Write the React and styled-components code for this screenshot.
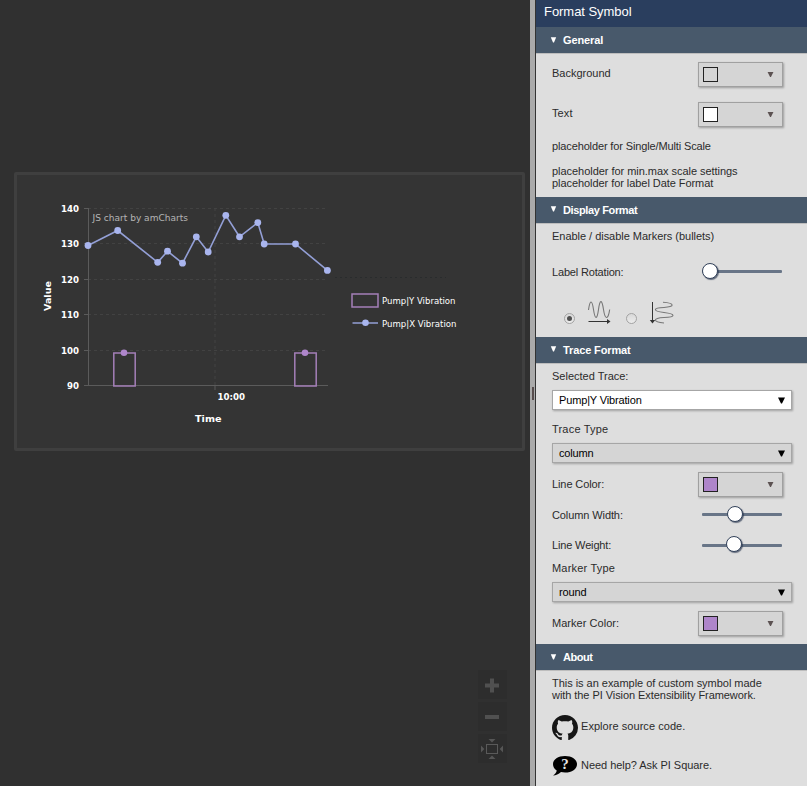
import React from "react";
import styled, { createGlobalStyle } from "styled-components";

const GlobalStyle = createGlobalStyle`
  * { box-sizing: border-box; }
  html, body { margin: 0; padding: 0; background: #303030; overflow: hidden; }
  body { font-family: "Liberation Sans", Arial, sans-serif; font-size: 11px; line-height: 12px; color: #2b2b2b; }
`;

const Workspace = styled.div`
  display: flex;
  width: 807px;
  height: 786px;
`;

const Canvas = styled.main`
  width: 530px;
  height: 786px;
  padding: 172px 5px 23px 14px;
  display: flex;
  flex-direction: column;
  background: #303030;
`;

const SymbolFrame = styled.section`
  width: 511px;
  height: 279px;
  border: 3px solid #3f3f3f;
  border-radius: 2px;
  background: #343434;
`;

const ChartSvg = styled.svg`
  display: block;
  font-family: "DejaVu Sans", Verdana, sans-serif;
`;

const ZoomTools = styled.div`
  margin: auto 18px 0 auto;
  display: flex;
  flex-direction: column;
  gap: 3px;
`;

const ZoomButton = styled.button`
  width: 29px;
  height: 29px;
  padding: 0;
  border: 0;
  background: #2d2d2d;
  svg { display: block; }
`;

const Splitter = styled.div`
  width: 6px;
  display: flex;
  align-items: center;
  justify-content: flex-end;
  background: #aaaaaa;
  border-right: 1px solid #333;
`;

const Grip = styled.span`
  width: 2px;
  height: 13px;
  margin-right: 1px;
  background: #574d4d;
`;

const Panel = styled.aside`
  width: 271px;
  background: #dedede;
`;

const PanelTitle = styled.h1`
  margin: 0;
  height: 27px;
  padding: 4px 8px 0;
  background: #2a3e5e;
  color: #fff;
  font-size: 13px;
  line-height: 15px;
  font-weight: 400;
  letter-spacing: -0.05px;
`;

const SectionHeader = styled.h2`
  margin: 0;
  height: 26px;
  padding: 0 14px;
  display: flex;
  align-items: center;
  gap: 5px;
  background: #48596b;
  color: #fff;
  font-size: 11px;
  font-weight: 700;
  letter-spacing: ${(p) => p.$spacing || 0}px;
  svg { margin-top: ${(p) => p.$caretTop}px; }
`;

const SectionBody = styled.div`
  height: ${(p) => p.$height}px;
  padding: 0 15px 0 16px;
  border-top: 1px solid #bdbdbd;
  display: flex;
  flex-direction: column;
`;

const Label = styled.div`
  height: 12px;
  margin-top: ${(p) => p.$top || 0}px;
  white-space: nowrap;
  letter-spacing: ${(p) => p.$spacing || 0}px;
`;

const Row = styled.div`
  display: flex;
  justify-content: space-between;
  align-items: flex-start;
  height: ${(p) => p.$height || 25}px;
  margin-top: ${(p) => p.$top || 0}px;
  padding-right: ${(p) => p.$inset ?? 9}px;
`;

const ColorButton = styled.button`
  width: 85px;
  height: 25px;
  padding: 0 8px 0 4px;
  display: flex;
  align-items: center;
  justify-content: space-between;
  background: #d5d5d5;
  border: 1px solid #a0a0a0;
  box-shadow: 1px 1px 2px rgba(0, 0, 0, 0.3);
`;

const Swatch = styled.span`
  width: 15px;
  height: 15px;
  border: 1px solid #222;
  background: ${(p) => p.$color};
`;

const SelectBox = styled.button`
  width: 240px;
  height: 20px;
  flex: none;
  margin-top: ${(p) => p.$top}px;
  padding: 0 6px;
  display: flex;
  align-items: center;
  justify-content: space-between;
  background: ${(p) => (p.$active ? "#fff" : "#d5d5d5")};
  border: 1px solid #a6a6a6;
  box-shadow: 1px 1px 2px rgba(0, 0, 0, 0.28);
  color: #000;
  font: 11px/12px "Liberation Sans", Arial, sans-serif;
  letter-spacing: -0.15px;
`;

const Track = styled.div`
  width: 80px;
  height: 3px;
  margin-top: ${(p) => p.$top}px;
  border-radius: 1px;
  background: #687587;
`;

const Thumb = styled.div`
  width: 16px;
  height: 16px;
  margin-left: ${(p) => p.$offset}px;
  transform: translateY(${(p) => p.$lift || -7}px);
  border: 1px solid #33425a;
  border-radius: 50%;
  background: #fff;
  box-shadow: 1px 1px 1px rgba(30, 45, 70, 0.65);
`;

const Orientation = styled.div`
  display: flex;
  height: 25px;
  margin-top: 19px;
  padding-left: 12px;
`;

const Radio = styled.span`
  width: 11px;
  height: 11px;
  margin-top: 12px;
  display: flex;
  align-items: center;
  justify-content: center;
  border: 1px solid #a3a3a3;
  border-radius: 50%;
  background: linear-gradient(#d8d8d8, #ececec);
  &::after {
    content: "";
    width: 5px;
    height: 5px;
    border-radius: 50%;
    background: ${(p) => (p.$checked ? "#505050" : "transparent")};
  }
`;

const WaveIcon = styled.svg`
  width: 26px;
  height: 26px;
  margin: 0 ${(p) => p.$after || 0}px 0 ${(p) => p.$before}px;
`;

const LinkRow = styled.a`
  display: flex;
  align-items: center;
  height: 26px;
  gap: 3px;
  margin-top: 13px;
  letter-spacing: ${(p) => p.$spacing}px;
  svg { flex: none; }
`;

const LinkText = styled.span`
  padding-bottom: 2px;
`;

const Caret = ({ color = "#000", w = 7, h = 7 }) => (
  <svg width={w} height={h} viewBox="0 0 7 6">
    <path d="M0 0H7L4 6H3Z" fill={color} />
  </svg>
);

const Header = ({ children, spacing, caretTop = -2 }) => (
  <SectionHeader $spacing={spacing} $caretTop={caretTop}>
    <svg width="8" height="6" viewBox="0 0 8 6"><path d="M.8 .2H6.2L4 5.5H3Z" fill="#fff" /></svg>
    {children}
  </SectionHeader>
);

const ColorRow = ({ label, color, top, labelTop = 5, spacing }) => (
  <Row $top={top}>
    <Label $top={labelTop} $spacing={spacing}>{label}</Label>
    <ColorButton aria-label={label}>
      <Swatch $color={color} />
      <Caret color="#5c5252" w={7} h={5} />
    </ColorButton>
  </Row>
);

const SliderRow = ({ label, top, height, offset, trackTop, lift, spacing = -0.1 }) => (
  <Row $top={top} $height={height} $inset={10}>
    <Label $spacing={spacing}>{label}</Label>
    <Track $top={trackTop}><Thumb $offset={offset} $lift={lift} /></Track>
  </Row>
);

const Select = ({ value, top, active }) => (
  <SelectBox $top={top} $active={active}>{value}<Caret /></SelectBox>
);

const points = [
  [88, 245.5], [117.7, 230.5], [157.7, 262.3], [167.5, 251.2], [182.5, 263.2],
  [196.3, 236.8], [208.2, 252], [225.8, 215.3], [239.5, 236.8], [257.8, 222.6],
  [264.2, 244], [295.5, 244], [327.4, 270.4],
];
const ticks = [[140, 208.5], [130, 243.5], [120, 279.5], [110, 314.5], [100, 350.5], [90, 385.5]];
const columns = [[113.8, 124], [294.8, 305]];

const Chart = () => (
  <ChartSvg width="505" height="273" viewBox="17 175 505 273">
    <g stroke="#424242" strokeDasharray="3 3">
      {ticks.map(([v, y]) => <path key={v} d={`M88 ${y}H327`} />)}
      <path d="M215 208V386" />
    </g>
    <path d="M335 277.5H446" stroke="#292c2d" strokeDasharray="2 3" />
    <g stroke="#5b5b5b">
      <path d="M88.5 208V386M84 385.5H328M215 386V390" />
      {ticks.map(([v, y]) => <path key={v} d={`M84 ${y}H89`} />)}
    </g>
    <g fill="#fff" fontWeight="700" fontSize="9">
      {ticks.map(([v, y]) => (
        <text key={v} x={v === 90 ? 67 : 61} y={y + 3.5} textLength={v === 90 ? 12 : 18} lengthAdjust="spacingAndGlyphs">{v}</text>
      ))}
      <text x="217.5" y="400" textLength="27.5" lengthAdjust="spacingAndGlyphs">10:00</text>
      <text x="195" y="422" textLength="26.5" lengthAdjust="spacingAndGlyphs">Time</text>
      <text transform="translate(51 311) rotate(-90)" textLength="30" lengthAdjust="spacingAndGlyphs">Value</text>
    </g>
    <text x="92.5" y="220.5" fontSize="9.5" fill="#b4b4b4" textLength="95.5" lengthAdjust="spacingAndGlyphs">JS chart by amCharts</text>
    {columns.map(([x, cx]) => (
      <g key={x}>
        <path d={`M${x} 353H${x + 21.4}V386H${x}Z`} fill="none" stroke="#a47fb8" strokeWidth="1.5" />
        <circle cx={cx} cy="352.7" r="3.3" fill="#af86cb" />
      </g>
    ))}
    <polyline points={points.map((p) => p.join(",")).join(" ")} fill="none" stroke="#939fd6" strokeWidth="1.6" />
    {points.map(([x, y]) => <circle key={x} cx={x} cy={y} r="3.4" fill="#a9b5ee" />)}
    <rect x="352" y="294" width="26" height="13" fill="none" stroke="#a47fb8" strokeWidth="1.5" />
    <path d="M352.5 323H378" stroke="#939fd6" strokeWidth="1.5" />
    <circle cx="365.5" cy="322.8" r="3.3" fill="#a9b5ee" />
    <g fill="#fff" fontSize="9">
      <text x="382" y="304" textLength="73.5" lengthAdjust="spacingAndGlyphs">Pump|Y Vibration</text>
      <text x="382" y="327" textLength="74.5" lengthAdjust="spacingAndGlyphs">Pump|X Vibration</text>
    </g>
  </ChartSvg>
);

export default function App() {
  return (
    <Workspace>
      <GlobalStyle />
      <Canvas>
        <SymbolFrame><Chart /></SymbolFrame>
        <ZoomTools>
          <ZoomButton aria-label="Zoom in">
            <svg width="29" height="29"><path d="M7 15.5H21M14 8.500V22.500" stroke="#505050" strokeWidth="4" /></svg>
          </ZoomButton>
          <ZoomButton aria-label="Zoom out">
            <svg width="29" height="29"><path d="M7 15H21" stroke="#505050" strokeWidth="4" /></svg>
          </ZoomButton>
          <ZoomButton aria-label="Fit to screen">
            <svg width="29" height="29">
              <rect x="8.5" y="10.5" width="11" height="9" fill="none" stroke="#5a5a5a" />
              <path d="M10.5 5H17.5L14 8.5ZM10.5 25H17.5L14 21.5ZM3 11.5V18.5L6.3 15ZM25 11.5V18.5L21.7 15Z" fill="#565656" />
            </svg>
          </ZoomButton>
        </ZoomTools>
      </Canvas>
      <Splitter><Grip /></Splitter>
      <Panel>
        <PanelTitle>Format Symbol</PanelTitle>

        <Header spacing={-0.1} caretTop={0}>General</Header>
        <SectionBody $height={144}>
          <ColorRow label="Background" color="#d5d5d5" top={8} />
          <ColorRow label="Text" color="#fff" top={15} spacing={0.1} />
          <Label $top={13} $spacing={-0.13}>placeholder for Single/Multi Scale</Label>
          <Label $top={13} $spacing={-0.04}>placeholder for min.max scale settings</Label>
          <Label $spacing={-0.06}>placeholder for label Date Format</Label>
        </SectionBody>

        <Header spacing={-0.37}>Display Format</Header>
        <SectionBody $height={114}>
          <Label $top={6} $spacing={-0.03}>Enable / disable Markers (bullets)</Label>
          <SliderRow label="Label Rotation:" top={24} height={16} offset={0} trackTop={4} spacing={-0.17} />
          <Orientation>
            <Radio $checked />
            <WaveIcon $before={13} $after={12} viewBox="1 0 26 26">
              <path d="M1.500 9C3-1.500 5-1.500 6.500 8.500S10 19.500 11.500 8.500 15-1.500 16.500 8.500 21 20 22.700 8.500" fill="none" stroke="#777" strokeWidth="1.1" />
              <path d="M1.500 20.500H21" stroke="#333" /><path d="M20 18L23.500 20.500 20 23" fill="#333" />
            </WaveIcon>
            <Radio />
            <WaveIcon $before={12} viewBox="0 0 26 26">
              <path d="M14 1.200C26 2 26 6 15 6.500S3 10 15 11.500 27 16 15 16.500 4 21 15 22" fill="none" stroke="#777" strokeWidth="1.1" />
              <path d="M3.500 1V21" stroke="#333" /><path d="M.8 19L3.500 22.500 6.200 19" fill="#333" />
            </WaveIcon>
          </Orientation>
        </SectionBody>

        <Header spacing={-0.12}>Trace Format</Header>
        <SectionBody $height={281}>
          <Label $top={6}>Selected Trace:</Label>
          <Select value="Pump|Y Vibration" top={8} active />
          <Label $top={13} $spacing={0.2}>Trace Type</Label>
          <Select value="column" top={8} />
          <ColorRow label="Line Color:" color="#ae85ca" top={9} labelTop={6} spacing={-0.1} />
          <SliderRow label="Column Width:" top={12} height={12} offset={25} trackTop={4} />
          <SliderRow label="Line Weight:" top={18} height={12} offset={24} trackTop={5} lift={-8} spacing={-0.15} />
          <Label $top={11} $spacing={0.2}>Marker Type</Label>
          <Select value="round" top={8} />
          <ColorRow label="Marker Color:" color="#ae85ca" top={9} labelTop={6} spacing={0.04} />
        </SectionBody>

        <Header spacing={-0.45} caretTop={0}>About</Header>
        <SectionBody $height={116}>
          <Label $top={6} $spacing={-0.03}>This is an example of custom symbol made</Label>
          <Label $spacing={-0.06}>with the PI Vision Extensibility Framework.</Label>
          <LinkRow $spacing={0.05}>
            <svg width="26" height="25" viewBox="0 0 16 15.6" preserveAspectRatio="none">
              <path fill="#161616" d="M8 0C3.58 0 0 3.58 0 8c0 3.54 2.29 6.53 5.47 7.59.4.07.55-.17.55-.38 0-.19-.01-.82-.01-1.49-2.01.37-2.53-.49-2.69-.94-.09-.23-.48-.94-.82-1.13-.28-.15-.68-.52-.01-.53.63-.01 1.08.58 1.23.82.72 1.21 1.87.87 2.33.66.07-.52.28-.87.51-1.07-1.78-.2-3.64-.89-3.64-3.95 0-.87.31-1.59.82-2.15-.08-.2-.36-1.02.08-2.12 0 0 .67-.21 2.2.82.64-.18 1.32-.27 2-.27.68 0 1.36.09 2 .27 1.53-1.04 2.2-.82 2.2-.82.44 1.1.16 1.92.08 2.12.51.56.82 1.27.82 2.15 0 3.07-1.87 3.75-3.65 3.95.29.25.54.73.54 1.48 0 1.07-.01 1.93-.01 2.2 0 .21.15.46.55.38A8.013 8.013 0 0016 8c0-4.42-3.58-8-8-8z" />
            </svg>
            <LinkText>Explore source code.</LinkText>
          </LinkRow>
          <LinkRow $spacing={-0.04}>
            <svg width="26" height="22" viewBox="0 0 26 22">
              <path d="M13 1C20 1 25 4.500 25 9.200S20 17.500 13 17.500C11.500 17.500 10.200 17.300 9 17 6.500 19.500 4 20.200 1 20.500 3 19.200 4.500 17.500 4.700 15.500 2.300 14 1 11.800 1 9.200 1 4.500 6 1 13 1Z" fill="#000" />
              <text x="13" y="14.200" textAnchor="middle" fontFamily="Liberation Serif, serif" fontWeight="700" fontSize="15" fill="#e6e6e6">?</text>
            </svg>
            <LinkText>Need help? Ask PI Square.</LinkText>
          </LinkRow>
        </SectionBody>
      </Panel>
    </Workspace>
  );
}
